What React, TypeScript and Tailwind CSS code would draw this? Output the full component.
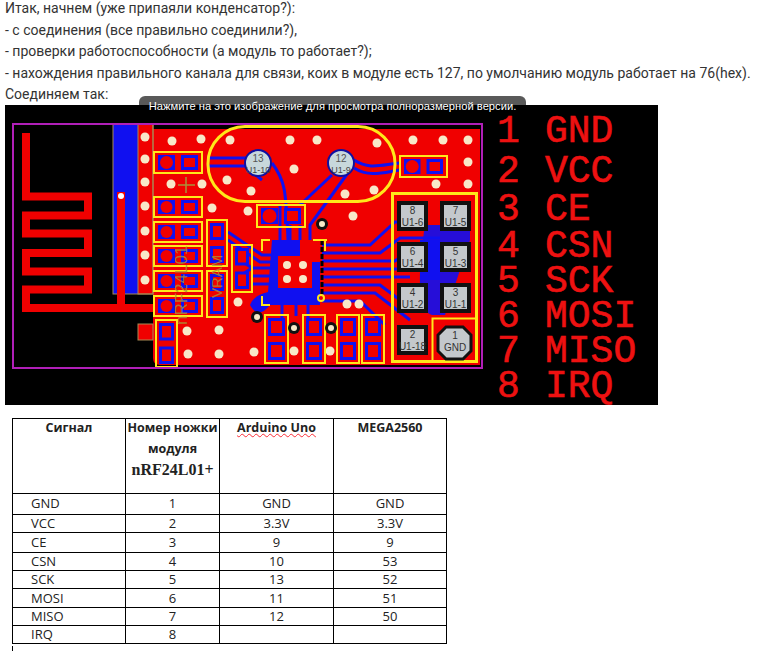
const lines = [
  "Итак, начнем (уже припаяли конденсатор?):",
  "- с соединения (все правильно соединили?),",
  "- проверки работоспособности (а модуль то работает?);",
  "- нахождения правильного канала для связи, коих в модуле есть 127, по умолчанию модуль работает на 76(hex).",
  "Соединяем так:",
];

const rows = [
  { s: "GND", n: "1", a: "GND", m: "GND", h: "h-[21px] [&>td]:pb-[2px]" },
  { s: "VCC", n: "2", a: "3.3V", m: "3.3V", h: "h-[18px]" },
  { s: "CE", n: "3", a: "9", m: "9", h: "h-[20px]" },
  { s: "CSN", n: "4", a: "10", m: "53", h: "h-[18px]" },
  { s: "SCK", n: "5", a: "13", m: "52", h: "h-[18px]" },
  { s: "MOSI", n: "6", a: "11", m: "51", h: "h-[19px]" },
  { s: "MISO", n: "7", a: "12", m: "50", h: "h-[18px]" },
  { s: "IRQ", n: "8", a: "", m: "", h: "h-[18px]" },
];

const dots = [
  [145, 137], [145, 159], [145, 182], [145, 206], [145, 231], [145, 255], [145, 280],
  [172, 141], [201, 139], [230, 140], [171, 184], [202, 184], [227, 180], [251, 191],
  [212, 208], [248, 211], [238, 302], [187, 331], [219, 330], [188, 354], [219, 354],
  [254, 352], [290, 140], [317, 140], [377, 143], [294, 169], [345, 194], [374, 190],
  [353, 216], [413, 140], [443, 140], [468, 140], [468, 162], [436, 184], [468, 184],
  [347, 304], [359, 304], [294, 351], [330, 351],
];

const hParts = [
  [154, 152, 48, 21], [154, 197, 48, 20], [154, 222, 48, 20],
  [154, 246, 48, 20], [154, 271, 48, 20], [154, 296, 48, 20],
  [400, 156, 47, 21], [257, 205, 48, 22],
];

const vParts = [
  [207, 220, 20, 46], [207, 271, 20, 46], [232, 245, 20, 47], [156, 320, 21, 47],
  [265, 315, 23, 48], [303, 315, 22, 48], [337, 315, 22, 48], [362, 315, 22, 48],
];

const greyPads = [
  [399, 203, "8", "U1-6"], [442, 203, "7", "U1-5"],
  [399, 244, "6", "U1-4"], [442, 244, "5", "U1-3"],
  [399, 285, "4", "U1-2"], [442, 285, "3", "U1-1"],
  [399, 327, "2", "U1-18"],
] as const;

const pinout = [
  ["1", "GND", 142], ["2", "VCC", 182], ["3", "CE", 220], ["4", "CSN", 257],
  ["5", "SCK", 292], ["6", "MOSI", 327], ["7", "MISO", 362], ["8", "IRQ", 397],
] as const;

const traces = [
  "M208 158 H250", "M208 166 H245 L262 180", "M272 163 C285 180 286 190 288 240",
  "M332 175 L300 205", "M350 170 L310 225 V240", "M354 160 C370 170 380 165 400 163",
  "M354 168 C370 178 385 172 400 170", "M322 245 H370 L395 222 H410",
  "M322 253 H380 L400 238 H440", "M322 261 H395 L410 250", "M322 269 H400",
  "M322 277 H410", "M322 285 H380 L400 300", "M322 293 H375 L410 320",
  "M322 301 H360 L385 325", "M228 232 L262 255 H272", "M228 240 L260 262 H272",
  "M252 268 H272", "M240 260 L252 268 L240 276", "M252 276 H272", "M252 284 H272",
  "M282 300 V318", "M296 300 V316", "M308 300 V318", "M280 205 V240", "M290 225 V240", "M300 225 V240",
];

const Part = ({ x, y, w, h, vertical }: { x: number; y: number; w: number; h: number; vertical?: boolean }) => {
  const gap = 6;
  return (
    <g>
      {vertical ? (
        <>
          <rect x={x + 3} y={y + 3} width={w - 6} height={(h - gap) / 2 - 3} fill="#1010f0" />
          <rect x={x + 6} y={y + 6} width={w - 12} height={(h - gap) / 2 - 9} fill="#f00000" />
          <rect x={x + 3} y={y + (h + gap) / 2} width={w - 6} height={(h - gap) / 2 - 3} fill="#1010f0" />
          <rect x={x + 6} y={y + (h + gap) / 2 + 3} width={w - 12} height={(h - gap) / 2 - 9} fill="#f00000" />
        </>
      ) : (
        <>
          <rect x={x + 4} y={y + 3} width={(w - gap) / 2 - 4} height={h - 6} fill="#1010f0" />
          <circle cx={x + 4 + ((w - gap) / 2 - 4) / 2} cy={y + h / 2} r={(h - 8) / 2} fill="#f00000" />
          <rect x={x + (w + gap) / 2} y={y + 3} width={(w - gap) / 2 - 4} height={h - 6} fill="#1010f0" />
          <rect x={x + (w + gap) / 2 + 3} y={y + 6} width={(w - gap) / 2 - 10} height={h - 12} fill="#f00000" />
        </>
      )}
      <rect x={x} y={y} width={w} height={h} fill="none" stroke="#ffe81a" strokeWidth="2" />
    </g>
  );
};

const Pcb = () => {
  return (
    <svg viewBox="5 105 653 300" className="block h-[300px] w-[653px]" fontFamily="'Liberation Sans', sans-serif">
      <rect x="5" y="105" width="653" height="300" fill="#000" />

      {/* board */}
      <path d="M153 129 H480 V365 H160 Q153 365 153 358 Z" fill="#f00000" />
      <rect x="138" y="124" width="15" height="170" fill="#f00000" />
      <rect x="113" y="124" width="25" height="170" fill="#1010f0" />
      <rect x="113" y="124" width="40" height="170" fill="none" stroke="#a88a55" />
      <rect x="138" y="124" width="15" height="170" fill="none" stroke="#a88a55" />
      <rect x="138" y="324" width="15" height="16" fill="#f00000" stroke="#a88a55" />

      {/* antenna */}
      <path d="M26 133 V196.5 H88 V215.5 H26 V233.5 H88 V253 H26 V271.5 H88 V289.5 H26 V308 H153 M121 192 V308" fill="none" stroke="#f00000" strokeWidth="8" />
      <circle cx="121" cy="196" r="3" fill="#fff" />

      {/* ic and traces */}
      <path d="M272 240 H300 V262 H320 V305 H270 Q258 320 250 305 Q254 295 268 292 Z" fill="#1010f0" />
      <path d="M432 225 H470 V240 L445 315 H432 Q412 310 425 225 Z" fill="#1010f0" opacity="0.9" />
      <path d="M420 240 H440 V280 H420 Z" fill="#1010f0" />
      {traces.map((d, key) => {
        return <path key={key} d={d} fill="none" stroke="#1010f0" strokeWidth="3" />;
      })}
      <path d="M322 240 V295" stroke="#000" strokeWidth="3" strokeDasharray="5 2" />
      <rect x="278" y="256" width="34" height="32" fill="#f00000" />

      {dots.map(([cx, cy], key) => {
        return <circle key={key} cx={cx} cy={cy} r="4.5" fill="#f8e8c8" />;
      })}
      <circle cx="287" cy="265" r="4" fill="#f8e8c8" />
      <circle cx="303" cy="265" r="4" fill="#f8e8c8" />
      <circle cx="287" cy="279" r="4" fill="#f8e8c8" />
      <circle cx="303" cy="279" r="4" fill="#f8e8c8" />

      {/* crystal */}
      <rect x="208" y="126.5" width="187" height="75" rx="37" fill="none" stroke="#ffe81a" strokeWidth="3" />
      {[
        [258, 163, "13", "U1-10"],
        [341, 163, "12", "U1-9"],
      ].map(([cx, cy, a, b]) => {
        return (
          <g key={a}>
            <circle cx={cx} cy={cy} r="13" fill="#c8d8dc" stroke="#1010a0" strokeWidth="2" />
            <text x={cx} y={+cy - 1} fontSize="10" textAnchor="middle" fill="#555">{a}</text>
            <text x={cx} y={+cy + 10} fontSize="9" textAnchor="middle" fill="#444">{b}</text>
          </g>
        );
      })}

      {hParts.map(([x, y, w, h], key) => {
        return <Part key={key} x={x} y={y} w={w} h={h} />;
      })}
      {vParts.map(([x, y, w, h], key) => {
        return <Part key={key} x={x} y={y} w={w} h={h} vertical />;
      })}

      {/* silkscreen */}
      <path d="M178 185 H195 M186 177 V193" stroke="#a8923a" strokeWidth="1.5" />
      <text transform="translate(187 325) rotate(-90)" fontSize="17" fill="#a8923a" opacity="0.8">nRF24L01</text>
      <text transform="translate(222 298) rotate(-90)" fontSize="15" fill="#a8923a" opacity="0.8">VRAM</text>
      <path d="M262 251 V240 H270 M327 240 H322 M313 240 H325 V251 M262 296 V305 H270" fill="none" stroke="#ffe81a" strokeWidth="2" />
      <circle cx="321" cy="298" r="3" fill="none" stroke="#ffe81a" strokeWidth="2" />

      {[
        [322, 224],
        [257, 317],
        [294, 328],
        [331, 328],
      ].map(([cx, cy], key) => {
        return (
          <g key={key}>
            <circle cx={cx} cy={cy} r="6" fill="#111" />
            <circle cx={cx} cy={cy} r="3" fill="#f8e8c8" />
          </g>
        );
      })}

      {/* connector */}
      <rect x="392.5" y="193.5" width="84" height="168" fill="none" stroke="#ffe81a" strokeWidth="3" />
      <rect x="432.5" y="318.5" width="44" height="43" fill="none" stroke="#ffe81a" strokeWidth="2" />
      {greyPads.map(([x, y, a, b]) => {
        return (
          <g key={a}>
            <rect x={x} y={y} width="27" height="26" fill="#c4c8cc" stroke="#111" strokeWidth="4" />
            <text x={x + 13.5} y={y + 11} fontSize="10" textAnchor="middle" fill="#333">{a}</text>
            <text x={x + 13.5} y={y + 23} fontSize="10" textAnchor="middle" fill="#333">{b}</text>
          </g>
        );
      })}
      <path d="M446 327 L463 327 L471 335 L471 351 L463 359 L446 359 L438 351 L438 335 Z" fill="#c4c8cc" stroke="#111" strokeWidth="3" />
      <text x="455" y="339" fontSize="10" textAnchor="middle" fill="#333">1</text>
      <text x="455" y="351" fontSize="10" textAnchor="middle" fill="#333">GND</text>

      <rect x="13" y="124" width="469" height="244" fill="none" stroke="#b01fb8" strokeWidth="2" />

      {/* pin names */}
      {pinout.map(([n, name, y]) => {
        return (
          <g key={n} fontFamily="'Liberation Mono', monospace" fontSize="38" fill="#ee1111" stroke="#ee1111" strokeWidth="0.6">
            <text x="497" y={y}>{n}</text>
            <text x="545" y={y}>{name}</text>
          </g>
        );
      })}
    </svg>
  );
};

export default function App() {
  return (
    <div className="min-h-[655px] w-[759px] overflow-hidden bg-white">
      <div className="-mt-[2px] h-[107px] pl-[5px] font-['Roboto',sans-serif] text-[14px] leading-[21.5px] whitespace-nowrap text-[#333]">
        {lines.map((line, key) => {
          return <div key={key}>{line}</div>;
        })}
      </div>

      <div className="relative ml-[5px] w-[653px]">
        <Pcb />
        <div className="absolute top-[-9px] left-[134px] h-[17px] w-[387px] rounded-t-md bg-black/65 pt-[3px] text-center font-['Liberation_Sans',sans-serif] text-[11.2px] leading-[14px] whitespace-nowrap text-white">
          Нажмите на это изображение для просмотра полноразмерной версии.
        </div>
      </div>

      <table className="mt-[13px] ml-3 w-[434px] table-fixed border-collapse border border-black font-['Open_Sans',sans-serif] text-[13px] text-[#222]">
        <colgroup>
          <col className="w-[113px]" />
          <col className="w-[94px]" />
          <col className="w-[114px]" />
          <col className="w-[113px]" />
        </colgroup>
        <tbody>
          <tr className="h-[75px] align-top text-center text-[12.5px] leading-[21px] font-bold">
            <td className="border border-black">
              <div className="-mt-[2px]">Сигнал</div>
            </td>
            <td className="border border-black whitespace-nowrap">
              <div className="-mt-[2px]">Номер ножки</div>
              <div>модуля</div>
              <div className="font-['Liberation_Serif',serif] text-[16px]">nRF24L01+</div>
            </td>
            <td className="border border-black">
              <div className="-mt-[2px]">
                <span className="underline decoration-red-500 decoration-wavy decoration-1">Arduino Uno</span>
              </div>
            </td>
            <td className="border border-black">
              <div className="-mt-[2px]">MEGA2560</div>
            </td>
          </tr>
          {rows.map((row) => {
            return (
              <tr className={`${row.h} text-center leading-none`} key={row.s}>
                <td className="border border-black pl-[18px] text-left">{row.s}</td>
                <td className="border border-black">{row.n}</td>
                <td className="border border-black">{row.a}</td>
                <td className="border border-black">{row.m}</td>
              </tr>
            );
          })}
        </tbody>
      </table>
      <div className="mt-[2px] ml-3 h-[5px] w-px bg-black" />
    </div>
  );
}
